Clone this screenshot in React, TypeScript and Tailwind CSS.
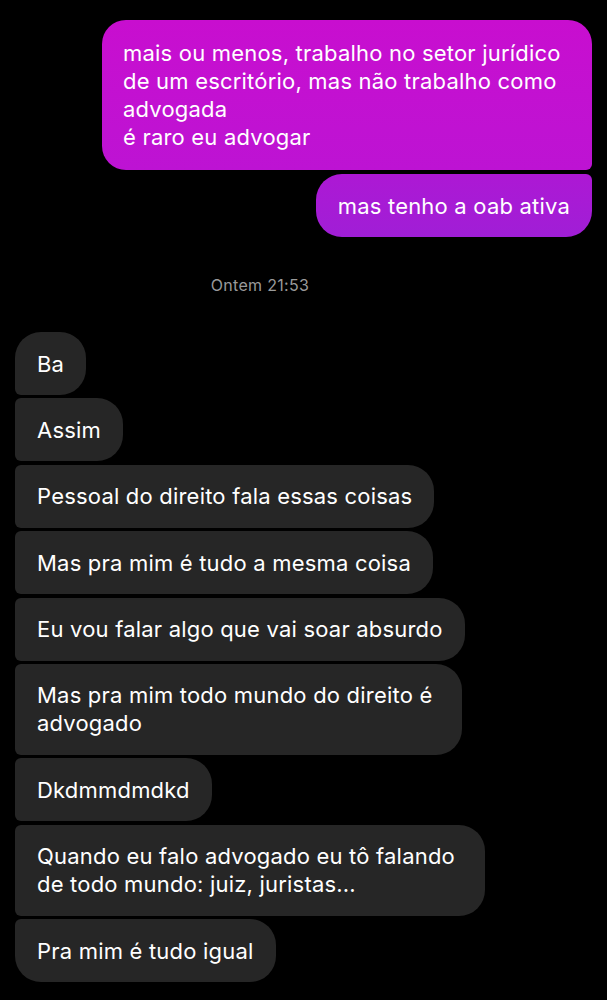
const received: { lines: string[]; pos: "first" | "mid" | "last" }[] = [
  { lines: ["Ba"], pos: "first" },
  { lines: ["Assim"], pos: "mid" },
  { lines: ["Pessoal do direito fala essas coisas"], pos: "mid" },
  { lines: ["Mas pra mim é tudo a mesma coisa"], pos: "mid" },
  { lines: ["Eu vou falar algo que vai soar absurdo"], pos: "mid" },
  { lines: ["Mas pra mim todo mundo do direito é", "advogado"], pos: "mid" },
  { lines: ["Dkdmmdmdkd"], pos: "mid" },
  { lines: ["Quando eu falo advogado eu tô falando", "de todo mundo: juiz, juristas..."], pos: "mid" },
  { lines: ["Pra mim é tudo igual"], pos: "last" },
];

const cornerClass = {
  first: "rounded-[26px] rounded-bl-[6px]",
  mid: "rounded-[26px] rounded-l-[6px]",
  last: "rounded-[26px] rounded-tl-[6px]",
};

export default function App() {
  return (
    <div
      className="min-h-[1000px] w-full bg-black px-[15px] pt-5 text-white"
      style={{ fontFamily: "Inter, 'Noto Sans', sans-serif" }}
    >
      <div className="flex flex-col items-end gap-[4px]">
        <div className="max-w-[490px] rounded-[24px] rounded-br-[6px] bg-gradient-to-b from-[#c80ecf] to-[#bd13d3] px-[21px] py-[19px] text-[22px] leading-[28px] tracking-[0.2px]">
          mais ou menos, trabalho no setor jurídico de um escritório, mas não trabalho como advogada
          <br />é raro eu advogar
        </div>
        <div className="rounded-[26px] rounded-tr-[6px] bg-gradient-to-b from-[#ad18d4] to-[#a01ed6] px-[22px] py-[17.5px] text-[22px] leading-[28px] tracking-[0.2px]">
          mas tenho a oab ativa
        </div>
      </div>

      <div className="flex h-[95px] items-center justify-center pr-[87px] text-[16px] tracking-[0.3px] text-[#9a9a9a]">
        Ontem 21:53
      </div>

      <div className="flex flex-col items-start gap-[3.4px]">
        {received.map((m, i) => (
          <div
            key={i}
            className={`whitespace-nowrap bg-[#262626] py-[17.5px] pl-[22px] text-[22px] leading-[28px] tracking-[0.2px] ${
              m.lines.length > 1 ? "pr-[30px]" : "pr-[22px]"
            } ${cornerClass[m.pos]}`}
          >
            {m.lines.map((line, j) => (
              <div key={j}>{line}</div>
            ))}
          </div>
        ))}
      </div>
    </div>
  );
}
